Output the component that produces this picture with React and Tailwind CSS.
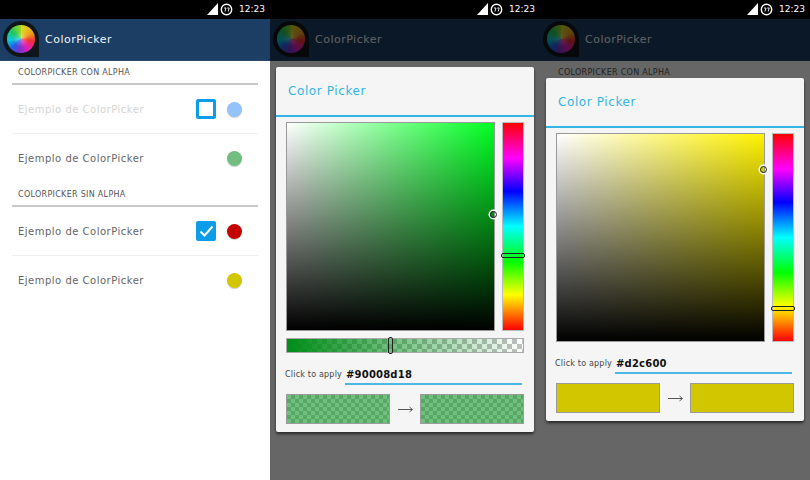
const FONT = "font-['DejaVu_Sans',sans-serif]";

function StatusBar() {
  return (
    <div className="relative z-20 h-[19px] bg-black flex items-center justify-end pr-[5px]">
      <svg width="11" height="12" viewBox="0 0 11 12" className="mt-[-1px]">
        <path d="M11 0V12H0Z" fill="#fff" />
      </svg>
      <svg width="13" height="13" viewBox="0 0 13 13" className="ml-[2px] mr-[6px] mt-[-1px]">
        <circle cx="6.5" cy="6.5" r="5.2" fill="none" stroke="#fff" strokeWidth="1.4" />
        <path d="M4 5h2l-1 3.5M7.2 5h2l-1 3.5" fill="none" stroke="#fff" strokeWidth="0.9" />
      </svg>
      <span className="text-[9px] text-white">12:23</span>
    </div>
  );
}

function ActionBar() {
  return (
    <div className="h-[42px] bg-[#1c3e64] flex items-center pl-[3px] border-b border-[#2a4a6c]">
      <div className="w-[36px] h-[36px] mt-[-1px] bg-[#10151a] rounded-full rounded-br-[3px] flex items-center justify-center">
        <div className="w-[28px] h-[28px] rounded-full bg-[radial-gradient(circle,rgba(255,255,255,0.35),rgba(255,255,255,0)_40%),conic-gradient(#d8e020,#f0a020_60deg,#f03030_100deg,#e820b0_140deg,#8030d0_185deg,#2060e8_225deg,#10c8d8_265deg,#20c860_310deg,#a0d820)]"></div>
      </div>
      <span className="ml-[6px] pt-[2px] text-[11px] tracking-[0.5px] text-[#eef2f6]">ColorPicker</span>
    </div>
  );
}

function SectionHeader({ title }) {
  return (
    <div className="mx-[12px] h-[24px] pt-[2px] border-b-2 border-[#c9c9c9] flex items-center pl-[6px]">
      <span className="text-[8px] tracking-[0.3px] text-[#555]">{title}</span>
    </div>
  );
}

function Row({ color, disabled, check, last }) {
  return (
    <div className={`mx-[12px] h-[49px] flex items-center pl-[6px] ${last ? '' : 'border-b border-[#eeeeee]'}`}>
      <span className={`text-[10px] tracking-[0.5px] ${disabled ? 'text-[#d4d4d4]' : 'text-[#666]'}`}>
        Ejemplo de ColorPicker
      </span>
      <div className="ml-auto flex items-center pr-[16px]">
        {check === 'off' && (
          <div className="w-[20px] h-[20px] rounded-[2px] border-[3px] border-[#0c9ce8] bg-white mr-[11px]"></div>
        )}
        {check === 'on' && (
          <div className="w-[20px] h-[20px] rounded-[2px] bg-[#0c9ce8] mr-[11px] flex items-center justify-center">
            <svg width="15" height="12" viewBox="0 0 15 12">
              <path d="M1.5 6.5 5.5 10.5 13.5 1.5" fill="none" stroke="#fff" strokeWidth="2" />
            </svg>
          </div>
        )}
        <div className={`w-[15px] h-[15px] rounded-full shadow-[0_1px_1px_rgba(0,0,0,0.2)] ${color}`}></div>
      </div>
    </div>
  );
}

function SettingsList() {
  return (
    <div className="bg-white flex-1">
      <SectionHeader title="COLORPICKER CON ALPHA" />
      <Row color="bg-[#94c2fb]" disabled check="off" />
      <Row color="bg-[#72bd80]" last />
      <SectionHeader title="COLORPICKER SIN ALPHA" />
      <Row color="bg-[#c40000]" check="on" />
      <Row color="bg-[#d2c600]" last />
    </div>
  );
}

function Swatch({ alpha }) {
  return (
    <div
      className={`w-[104px] h-[30px] border border-[#9a9a9a] ${
        alpha
          ? 'bg-[linear-gradient(rgba(0,141,24,0.56),rgba(0,141,24,0.56)),repeating-conic-gradient(#c8c8c8_0_25%,#ffffff_0_50%)] bg-[length:100%_100%,8px_8px]'
          : 'bg-[#d2c600]'
      }`}
    ></div>
  );
}

function Dialog({ top, alpha, hex, sv, dot, hueY }) {
  return (
    <div
      className={`absolute z-10 left-[6px] w-[258px] bg-[#f5f5f5] rounded-[2px] shadow-[0_2px_3px_rgba(0,0,0,0.6)] ${top}`}
    >
      <div className="h-[50px] pl-[12px] flex items-center border-b-2 border-[#33b5e5]">
        <span className="text-[12px] tracking-[0.6px] text-[#33b5e5]">Color Picker</span>
      </div>
      <div className="px-[10px] pt-[5px]">
        <div className="flex gap-[7px]">
          <div className={`relative w-[209px] h-[209px] border border-[#999] ${sv}`}>
            <div
              className={`absolute w-[7px] h-[7px] rounded-full border-[1.5px] border-[#222] shadow-[0_0_0_1.5px_#fff] ${dot}`}
            ></div>
          </div>
          <div className="relative w-[22px] h-[209px] border border-[#bbb] bg-[linear-gradient(#ff0000,#ff00ff_17%,#0000ff_33%,#00ffff_50%,#00ff00_67%,#ffff00_83%,#ff0000)]">
            <div
              className={`absolute left-[-2px] right-[-2px] h-[5px] rounded-[2px] border-[1.5px] border-[#222] ${hueY}`}
            ></div>
          </div>
        </div>
        {alpha && (
          <div className="relative mt-[7px] h-[15px] border border-[#aaa] bg-[linear-gradient(to_right,#008d18,rgba(0,141,24,0)),repeating-conic-gradient(#c0c0c0_0_25%,#ffffff_0_50%)] bg-[length:100%_100%,10px_10px]">
            <div className="absolute left-[101px] top-[-2px] w-[5px] h-[17px] rounded-[2px] border-[1.5px] border-[#222]"></div>
          </div>
        )}
        <div className="flex items-center mt-[12px] ml-[-1px]">
          <span className="text-[8px] tracking-[0.2px] text-[#444] w-[60px] whitespace-nowrap">Click to apply</span>
          <div className="flex-1 mr-[2px] border-b-2 border-[#4bb8e8] h-[20px] pl-[1px] flex items-center">
            <span className="text-[10px] font-semibold tracking-[0.2px] text-[#111]">{hex}</span>
          </div>
        </div>
        <div className="flex items-center justify-between mt-[9px] pb-[8px]">
          <Swatch alpha={alpha} />
          <svg width="15" height="7" viewBox="0 0 15 7">
            <path d="M0 3.5H14M11.5 1 14.5 3.5 11.5 6" fill="none" stroke="#444" strokeWidth="0.9" />
          </svg>
          <Swatch alpha={alpha} />
        </div>
      </div>
    </div>
  );
}

function Phone({ children, dimmed }) {
  return (
    <div className="relative w-[270px] h-[480px] flex flex-col overflow-hidden">
      <StatusBar />
      <ActionBar />
      <SettingsList />
      {dimmed && <div className="absolute inset-0 z-[5] bg-black/60"></div>}
      {children}
    </div>
  );
}

export default function App() {
  return (
    <div className={`w-[810px] h-[480px] flex overflow-hidden bg-white ${FONT}`}>
      <Phone />
      <Phone dimmed>
        <Dialog
          top="top-[67px]"
          alpha
          hex="#90008d18"
          sv="bg-[linear-gradient(to_top,#000,rgba(0,0,0,0)),linear-gradient(to_right,#fff,#00ff22)]"
          dot="left-[203px] top-[88px]"
          hueY="top-[130px]"
        />
      </Phone>
      <Phone dimmed>
        <Dialog
          top="top-[78px]"
          hex="#d2c600"
          sv="bg-[linear-gradient(to_top,#000,rgba(0,0,0,0)),linear-gradient(to_right,#fff,#fff200)]"
          dot="left-[203px] top-[32px]"
          hueY="top-[172px]"
        />
      </Phone>
    </div>
  );
}
